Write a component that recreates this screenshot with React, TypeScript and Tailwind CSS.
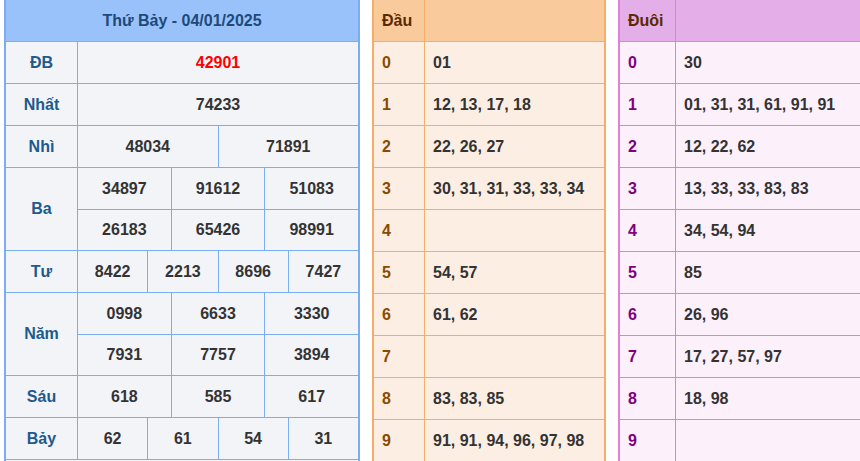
const rows: { label: string; lines: string[][] }[] = [
  { label: "ĐB", lines: [["42901"]] },
  { label: "Nhất", lines: [["74233"]] },
  { label: "Nhì", lines: [["48034", "71891"]] },
  { label: "Ba", lines: [["34897", "91612", "51083"], ["26183", "65426", "98991"]] },
  { label: "Tư", lines: [["8422", "2213", "8696", "7427"]] },
  { label: "Năm", lines: [["0998", "6633", "3330"], ["7931", "7757", "3894"]] },
  { label: "Sáu", lines: [["618", "585", "617"]] },
  { label: "Bảy", lines: [["62", "61", "54", "31"]] },
];
const dau = ["01", "12, 13, 17, 18", "22, 26, 27", "30, 31, 31, 33, 33, 34", "", "54, 57", "61, 62", "", "83, 83, 85", "91, 91, 94, 96, 97, 98"];
const duoi = ["30", "01, 31, 31, 61, 91, 91", "12, 22, 62", "13, 33, 33, 83, 83", "34, 54, 94", "85", "26, 96", "17, 27, 57, 97", "18, 98", ""];

export default function App() {
  return (
    <div className="flex w-[860px] h-[461px] overflow-hidden bg-white text-[16px] font-bold text-[#333]" style={{ fontFamily: '"Liberation Sans", Arial, sans-serif' }}>
      <div className="ml-[4px] w-[356px] shrink-0 border-x-2 border-[#7aaef2] bg-[#f3f4f8]">
        <div className="h-[42px] flex items-center justify-center bg-[#9ac2fa] text-[#1e4a7a] border-b border-[#7aaef2]">Thứ Bảy - 04/01/2025</div>
        {rows.map((r, i) => (
          <div key={i} className="flex border-b border-[#7aaef2]">
            <div className="w-[72px] shrink-0 flex items-center justify-center text-[#1e5a8c] border-r border-[#7aaef2]">{r.label}</div>
            <div className="flex-1 flex flex-col">
              {r.lines.map((l, j) => (
                <div key={j} className={`flex h-[41px] ${j > 0 ? "border-t border-[#7aaef2]" : ""}`}>
                  {l.map((n, k) => (
                    <div key={k} className={`flex-1 flex items-center justify-center ${k > 0 ? "border-l border-[#7aaef2]" : ""} ${i === 0 ? "text-[#f00]" : ""}`}>{n}</div>
                  ))}
                </div>
              ))}
            </div>
          </div>
        ))}
      </div>
      <Side title="Đầu" data={dau} ml="ml-[12px]" w="w-[234px]" split="w-[51px]" head="bg-[#f9cb9c]" body="bg-[#fdeee3]" border="border-[#f4ae6a]" digit="text-[#8b4a00]" titleC="text-[#5a2a00]" />
      <Side title="Đuôi" data={duoi} ml="ml-[12px]" w="w-[244px]" split="w-[56px]" head="bg-[#e4aee8]" body="bg-[#fcf0fb]" border="border-[#e080d8]" digit="text-[#800080]" titleC="text-[#5a2a00]" />
    </div>
  );
}

function Side(p: { title: string; data: string[]; ml: string; w: string; split: string; head: string; body: string; border: string; digit: string; titleC: string }) {
  return (
    <div className={`${p.ml} ${p.w} shrink-0 border-x-2 ${p.border} ${p.body}`}>
      <div className={`h-[42px] flex border-b ${p.border} ${p.head}`}>
        <div className={`${p.split} shrink-0 flex items-center pl-[8px] border-r ${p.border} ${p.titleC}`}>{p.title}</div>
        <div className="flex-1" />
      </div>
      {p.data.map((d, i) => (
        <div key={i} className={`h-[42px] flex border-b ${p.border}`}>
          <div className={`${p.split} shrink-0 flex items-center pl-[8px] border-r ${p.border} ${p.digit}`}>{i}</div>
          <div className="flex-1 flex items-center pl-[8px] whitespace-nowrap">{d}</div>
        </div>
      ))}
    </div>
  );
}
